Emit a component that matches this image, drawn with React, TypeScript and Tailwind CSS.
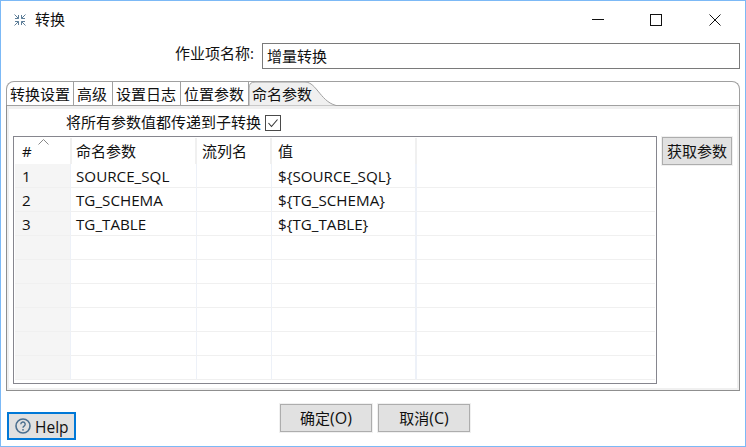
const FONT = "font-['Open_Sans','Noto_Sans_CJK_SC',sans-serif]";

const params = [
  { id: "1", name: "SOURCE_SQL", value: "${SOURCE_SQL}" },
  { id: "2", name: "TG_SCHEMA", value: "${TG_SCHEMA}" },
  { id: "3", name: "TG_TABLE", value: "${TG_TABLE}" },
  { id: "", name: "", value: "" },
  { id: "", name: "", value: "" },
  { id: "", name: "", value: "" },
  { id: "", name: "", value: "" },
  { id: "", name: "", value: "" },
  { id: "", name: "", value: "" },
];

const tabs = [
  { label: "转换设置", width: "w-[67px]" },
  { label: "高级", width: "w-[39px]" },
  { label: "设置日志", width: "w-[68px]" },
  { label: "位置参数", width: "w-[68px]" },
];

function AppIcon() {
  return (
    <svg width="12" height="12" viewBox="0 0 12 12" fill="none" stroke="#5f7f99" strokeWidth="1">
      <path d="M0.5 0.5l4 4M4.5 1v3.5H1" />
      <path d="M11.5 0.5l-4 4M7.5 1v3.5H11" />
      <path d="M0.5 11.5l4-4M4.5 11V7.5H1" />
      <path d="M11.5 11.5l-4-4M7.5 11V7.5H11" />
    </svg>
  );
}

function WindowControls() {
  return (
    <div className="flex items-center">
      <svg width="12" height="12" viewBox="0 0 12 12" className="mr-[46px]">
        <path d="M0 5.5h12" stroke="#111" strokeWidth="1" />
      </svg>
      <svg width="12" height="12" viewBox="0 0 12 12" className="mr-[47px]">
        <rect x="0.5" y="0.5" width="11" height="11" fill="none" stroke="#111" strokeWidth="1" />
      </svg>
      <svg width="12" height="12" viewBox="0 0 12 12" className="mr-[24px]">
        <path d="M0.5 0.5l11 11M11.5 0.5l-11 11" stroke="#111" strokeWidth="1" />
      </svg>
    </div>
  );
}

function ParamRow({ row }: { row: (typeof params)[number] }) {
  return (
    <div className="flex h-[24px] text-[15.2px] leading-[25px] text-[#111]">
      <div className="w-[55px] shrink-0 border-b border-[#f0f0f0] bg-[#f5f5f5] pl-[7px]">{row.id}</div>
      <div className="w-[127px] shrink-0 border-x border-b border-x-[#edf1f8] border-b-[#f0f0f0] pl-[5px]">{row.name}</div>
      <div className="w-[75px] shrink-0 border-r border-b border-r-[#edf1f8] border-b-[#f0f0f0]" />
      <div className="w-[145px] shrink-0 border-r-2 border-b border-r-[#edf1f8] border-b-[#f0f0f0] pl-[6px]">{row.value}</div>
      <div className="flex-1 border-b border-[#f0f0f0]" />
    </div>
  );
}

export default function App() {
  return (
    <div className={`${FONT} flex h-[447px] w-[746px] flex-col overflow-hidden border border-[#7cb9f6] bg-white text-[15px] text-[#111]`}>
      {/* title bar */}
      <div className="flex h-[37px] shrink-0 items-center justify-between pl-[13px]">
        <div className="flex items-center gap-[9px]">
          <AppIcon />
          <span className="text-[15px]">转换</span>
        </div>
        <WindowControls />
      </div>

      {/* job name */}
      <div className="mt-[5px] flex h-[26px] shrink-0 items-center justify-end pr-[5px]">
        <span className="mr-[8px] pb-[6px] text-[15px]">作业项名称:</span>
        <div className="flex h-[26px] w-[478px] items-center border border-[#7a7a7a] pl-[4px] text-[15px]">增量转换</div>
      </div>

      {/* tab folder */}
      <div className="mx-[5px] mt-[12px] flex h-[310px] shrink-0 flex-col">
        <div className="relative flex h-[24px] shrink-0 rounded-t-[8px] border-x border-t border-[#a0a0a0]">
          {tabs.map((tab) => (
            <div key={tab.label} className={`${tab.width} h-full shrink-0 rounded-tl-[6px] border-r border-[#a0a0a0] pl-[3px] text-[15px] leading-[24px]`}>
              {tab.label}
            </div>
          ))}
          <div className="relative w-[91px] shrink-0 pl-[3px] text-[15px] leading-[24px]">
            <svg width="91" height="24" viewBox="0 0 91 24" className="absolute left-0 top-0">
              <path d="M0 24V6Q0 0 6 0H56C68 0 72 22 90 24Z" fill="#f0f0f0" stroke="#a0a0a0" strokeWidth="1" />
            </svg>
            <span className="relative">命名参数</span>
          </div>
        </div>
        <div className="flex min-h-0 flex-1 flex-col border-x border-b border-[#8f8f8f] bg-white">
          <div className="h-[1px] shrink-0 bg-[#a0a0a0]" />
          <div className="flex min-h-0 flex-1 flex-col border-x-2 border-y-[3px] border-x-[#f0f0f0] border-y-[#f0f0f0] border-b-2">
            <div className="ml-[57px] mt-[3px] flex h-[20px] shrink-0 items-center gap-[4px]">
              <span>将所有参数值都传递到子转换</span>
              <svg width="16" height="16" viewBox="0 0 16 16" className="mt-[1px]">
                <rect x="0.5" y="0.5" width="15" height="15" fill="#fff" stroke="#4a4a4a" />
                <path d="M3.5 8l3 3.5 6-7" fill="none" stroke="#333" strokeWidth="1.1" />
              </svg>
            </div>
            <div className="ml-[4px] mt-[4px] flex shrink-0 items-start gap-[5px]">
              {/* params table */}
              <div className="h-[248px] w-[644px] shrink-0 border border-[#86868e] p-[1px]">
                <div className="flex h-[26px] text-[15px] leading-[26px]">
                  <div className="relative w-[55px] shrink-0 pl-[7px]">
                    #
                    <svg width="11" height="6" viewBox="0 0 11 6" className="absolute left-[23px] top-[1px]">
                      <path d="M0.5 5.5l5-5 5 5" fill="none" stroke="#888" />
                    </svg>
                  </div>
                  <div className="w-[127px] shrink-0 border-x-2 border-[#f0f0f0] pl-[4px]">命名参数</div>
                  <div className="w-[75px] shrink-0 border-r-2 border-[#f0f0f0] pl-[5px]">流列名</div>
                  <div className="w-[145px] shrink-0 border-r-2 border-[#f0f0f0] pl-[6px]">值</div>
                  <div className="flex-1" />
                </div>
                {params.map((row, i) => (
                  <ParamRow key={i} row={row} />
                ))}
              </div>
              <div className="mt-[1px] flex h-[28px] w-[70px] shrink-0 items-center justify-center border border-[#adadad] bg-[#e1e1e1] text-[15px] outline outline-[#f0f0f0]">
                获取参数
              </div>
            </div>
          </div>
        </div>
      </div>

      {/* bottom buttons */}
      <div className="relative mt-[13px] flex shrink-0 gap-[6px] pl-[279px]">
        <div className="flex h-[28px] w-[92px] items-center justify-center border border-[#adadad] bg-[#e1e1e1] text-[15px] outline outline-[#f0f0f0]">
          确定<span className="text-[16px]">(O)</span>
        </div>
        <div className="flex h-[28px] w-[92px] items-center justify-center border border-[#adadad] bg-[#e1e1e1] text-[15px] outline outline-[#f0f0f0]">
          取消<span className="text-[16px]">(C)</span>
        </div>
        <div className="absolute left-[6px] top-[8px] flex h-[28px] w-[69px] items-center gap-[4px] border-2 border-[#0078d7] bg-[#e1e1e1] pl-[6px] text-[15.5px] leading-[26px]">
          <svg width="16" height="16" viewBox="0 0 16 16" fill="none">
            <circle cx="8" cy="8" r="7" stroke="#4a6f8f" strokeWidth="1.6" />
            <path d="M5.8 6.2a2.2 2.2 0 1 1 3.3 1.9c-.7.4-1.1.8-1.1 1.6" stroke="#4a6f8f" strokeWidth="1.4" />
            <circle cx="8" cy="11.8" r="0.9" fill="#4a6f8f" />
          </svg>
          <span className="pt-[1px]">Help</span>
        </div>
      </div>
    </div>
  );
}
